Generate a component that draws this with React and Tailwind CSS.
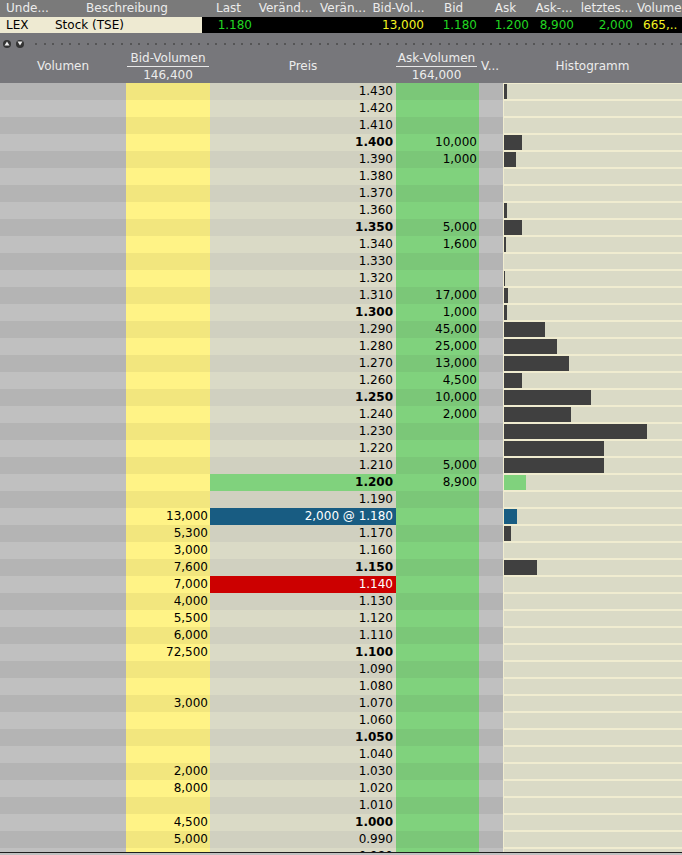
const BID = {
  '1.180': '13,000', '1.170': '5,300', '1.160': '3,000', '1.150': '7,600', '1.140': '7,000',
  '1.130': '4,000', '1.120': '5,500', '1.110': '6,000', '1.100': '72,500', '1.070': '3,000',
  '1.030': '2,000', '1.020': '8,000', '1.000': '4,500', '0.990': '5,000',
}

const ASK = {
  '1.400': '10,000', '1.390': '1,000', '1.350': '5,000', '1.340': '1,600', '1.310': '17,000',
  '1.300': '1,000', '1.290': '45,000', '1.280': '25,000', '1.270': '13,000', '1.260': '4,500',
  '1.250': '10,000', '1.240': '2,000', '1.210': '5,000', '1.200': '8,900',
}

// traded volume per price, in px
const HIST = {
  '1.430': 3, '1.400': 18, '1.390': 12, '1.360': 3, '1.350': 18, '1.340': 2, '1.320': 1,
  '1.310': 4, '1.300': 3, '1.290': 41, '1.280': 53, '1.270': 65, '1.260': 18, '1.250': 87,
  '1.240': 67, '1.230': 143, '1.220': 100, '1.210': 100, '1.200': 22, '1.180': 13,
  '1.170': 7, '1.150': 33,
}

const rows = Array.from({ length: 46 }, (_, i) => {
  const milli = 1430 - i * 10
  return { key: (milli / 1000).toFixed(3), bold: milli % 50 === 0, dark: i % 2 === 0 }
})

const TOP_COLS = [
  { w: 'w-[52px]', label: 'Unde...', align: 'pl-[6px] text-left' },
  { w: 'w-[150px]', label: 'Beschreibung', align: 'text-center' },
  { w: 'w-[53px]', label: 'Last', align: 'text-center' },
  { w: 'w-[61px]', label: 'Veränd...', align: 'text-center' },
  { w: 'w-[54px]', label: 'Verän...', align: 'text-center' },
  { w: 'w-[57px]', label: 'Bid-Vol...', align: 'text-center' },
  { w: 'w-[53px]', label: 'Bid', align: 'text-center' },
  { w: 'w-[51px]', label: 'Ask', align: 'text-center' },
  { w: 'w-[46px]', label: 'Ask-...', align: 'text-center' },
  { w: 'w-[59px]', label: 'letztes...', align: 'text-center' },
  { w: 'w-[60px]', label: 'Volumen', align: 'pl-[1px] text-left' },
]

function PriceCell({ r }) {
  if (r.key === '1.200')
    return <div className="bg-[#80d27d] pr-[3px] text-right font-bold">{r.key}</div>
  if (r.key === '1.180')
    return <div className="bg-[#185c82] pr-[3px] text-right text-white">2,000 @ {r.key}</div>
  if (r.key === '1.140')
    return <div className="bg-[#cc0000] pr-[3px] text-right text-white">{r.key}</div>
  return (
    <div className={`${r.dark ? 'bg-[#d0d0c0]' : 'bg-[#dadac6]'} pr-[3px] text-right ${r.bold ? 'font-bold' : ''}`}>
      {r.key}
    </div>
  )
}

function HistCell({ r }) {
  const w = HIST[r.key] || 0
  const color = r.key === '1.200' ? 'bg-[#80d27d]' : r.key === '1.180' ? 'bg-[#185c82]' : 'bg-[#404040]'
  return (
    <div className="border-l border-y border-[#f0ecd0] bg-[#dadac6]">
      {w > 0 && <div className={`h-full ${color}`} style={{ width: w }} />}
    </div>
  )
}

export default function App() {
  return (
    <div className="h-[855px] w-[682px] overflow-hidden bg-[#c0c0c0] font-['DejaVu_Sans',sans-serif] text-[12px] leading-[17px] text-black">
      {/* quote strip */}
      <div className="flex h-[17px] whitespace-nowrap bg-[#7a7a7a] text-[#ececec]">
        {TOP_COLS.map((c) => (
          <div key={c.label} className={`${c.w} shrink-0 overflow-hidden ${c.align}`}>{c.label}</div>
        ))}
      </div>
      <div className="flex h-[16px] whitespace-nowrap leading-[16px]">
        <div className="flex w-[202px] shrink-0 bg-[#eeead2]">
          <span className="w-[52px] pl-[6px]">LEX</span>
          <span className="pl-[3px]">Stock (TSE)</span>
        </div>
        <div className="flex flex-1 bg-black">
          <span className="w-[53px] pr-[3px] text-right text-[#22d622]">1.180</span>
          <span className="w-[61px]" />
          <span className="w-[54px]" />
          <span className="w-[57px] pr-[3px] text-right text-[#f4f420]">13,000</span>
          <span className="w-[53px] pr-[3px] text-right text-[#22d622]">1.180</span>
          <span className="w-[51px] pr-[2px] text-right text-[#22d622]">1.200</span>
          <span className="w-[46px] pr-[3px] text-right text-[#22d622]">8,900</span>
          <span className="w-[59px] pr-[3px] text-right text-[#22d622]">2,000</span>
          <span className="pl-[7px] text-[#f4f420]">665,..</span>
        </div>
      </div>

      {/* book header */}
      <div className="bg-[#77777b] pt-[4px] text-[#ececec]">
        <div className="flex h-[13px] items-center gap-[5px] pl-[3px]">
          <span className="flex h-[8px] w-[8px] items-center justify-center rounded-full bg-[#333]">
            <svg width="6" height="5" viewBox="0 0 6 5"><path d="M3 0.5 L5.5 4.5 L0.5 4.5 Z" fill="#f0f0f0" /></svg>
          </span>
          <span className="flex h-[8px] w-[8px] items-center justify-center rounded-full bg-[#333]">
            <svg width="6" height="5" viewBox="0 0 6 5"><path d="M0.5 0.5 L5.5 0.5 L3 4.5 Z" fill="#f0f0f0" /></svg>
          </span>
          <div className="ml-[6px] flex gap-[6.6px]">
            {Array.from({ length: 76 }, (_, i) => (
              <span key={i} className="h-[2px] w-[2px] rounded-full bg-[#4a4a4a]" />
            ))}
          </div>
        </div>
        <div className="grid h-[33px] grid-cols-[126px_84px_186px_83px_24px_179px] items-center whitespace-nowrap">
          <div className="text-center">Volumen</div>
          <div className="flex flex-col items-center px-[1px]">
            <div className="w-full border-b border-[#e8e8e8] text-center leading-[16px]">Bid-Volumen</div>
            <div className="leading-[16px]">146,400</div>
          </div>
          <div className="text-center">Preis</div>
          <div className="flex flex-col items-center pr-[2px]">
            <div className="w-full border-b border-[#e8e8e8] text-center leading-[16px]">Ask-Volumen</div>
            <div className="leading-[16px]">164,000</div>
          </div>
          <div className="pl-[2px]">V...</div>
          <div className="text-center">Histogramm</div>
        </div>
      </div>

      {/* ladder */}
      <div className="h-[770px] overflow-hidden border-b border-[#1e1e1e]">
        {rows.map((r) => (
          <div key={r.key} className="grid h-[17px] grid-cols-[126px_84px_186px_83px_24px_179px] whitespace-nowrap">
            <div className={r.dark ? 'bg-[#b4b4b4]' : 'bg-[#c0c0c0]'} />
            <div className={`${r.dark ? 'bg-[#f2e67e]' : 'bg-[#fff386]'} pr-[2px] text-right`}>{BID[r.key]}</div>
            <PriceCell r={r} />
            <div className={`${r.dark ? 'bg-[#7bc778]' : 'bg-[#80d27d]'} pr-[2px] text-right`}>{ASK[r.key]}</div>
            <div className={r.dark ? 'bg-[#b4b4b4]' : 'bg-[#c0c0c0]'} />
            <HistCell r={r} />
          </div>
        ))}
      </div>
    </div>
  )
}
